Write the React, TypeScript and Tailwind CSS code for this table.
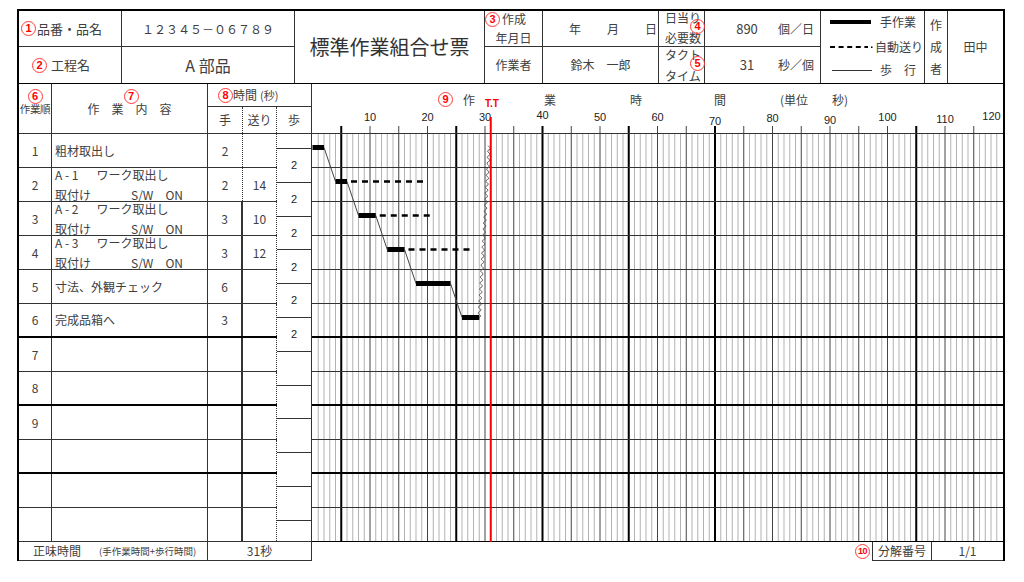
import React from "react";

const Num = ({ n, className = "" }: { n: string; className?: string }) => (
  <span
    className={`inline-flex w-[15px] h-[15px] shrink-0 items-center justify-center rounded-full border border-[#ff3b3b] text-[#ff0000] font-bold leading-none font-['Liberation_Sans',sans-serif] ${
      n.length > 1 ? "text-[9px] tracking-[-0.5px]" : "text-[11px]"
    } ${className}`}
  >
    {n}
  </span>
);

type Row = {
  n?: string;
  text?: string;
  code?: string;
  hand?: string;
  auto?: string;
};

const rows: Row[] = [
  { n: "1", text: "粗材取出し", hand: "2" },
  { n: "2", code: "A - 1", hand: "2", auto: "14" },
  { n: "3", code: "A - 2", hand: "3", auto: "10" },
  { n: "4", code: "A - 3", hand: "3", auto: "12" },
  { n: "5", text: "寸法、外観チェック", hand: "6" },
  { n: "6", text: "完成品箱へ", hand: "3" },
  { n: "7" },
  { n: "8" },
  { n: "9" },
  {},
  {},
  {},
];

// chart scale: 5.75px per second
const X = (t: number) => 0.5 + 5.75 * t;
const yc = (i: number) => 39.5 + 34 * i;

const bars = [
  [0, 2],
  [4, 6],
  [8, 11],
  [13, 16],
  [18, 24],
  [26, 29],
];
const autos: (number[] | null)[] = [null, [6, 20], [11, 21], [16, 28], null, null];
const thickT = [5, 25, 40, 55, 70, 105];
const labelY: Record<number, number> = {
  10: 117, 20: 117, 30: 117, 40: 115, 50: 117, 60: 117,
  70: 121, 80: 118, 90: 120, 100: 117, 110: 119, 120: 116,
};

function wave(x0: number, y0: number, x1: number, y1: number) {
  const dx = x1 - x0;
  const dy = y1 - y0;
  const L = Math.hypot(dx, dy);
  const nx = -dy / L;
  const ny = dx / L;
  const pts: string[] = [];
  for (let s = 0; s <= L; s += 1) {
    const off = 1.3 * Math.sin((2 * Math.PI * s) / 6);
    pts.push(`${(x0 + (dx * s) / L + nx * off).toFixed(2)},${(y0 + (dy * s) / L + ny * off).toFixed(2)}`);
  }
  return pts.join(" ");
}

const Chart = () => {
  const verticals = [];
  for (let t = 1; t < 120; t++) {
    if (thickT.includes(t)) {
      verticals.push(<rect key={t} x={X(t) - 1} y={18} width={2} height={416} fill="#000" />);
    } else if (t % 5 === 0) {
      verticals.push(<line key={t} x1={X(t)} x2={X(t)} y1={18} y2={433} stroke="#444" strokeWidth={1} />);
    } else {
      verticals.push(<line key={t} x1={X(t)} x2={X(t)} y1={25} y2={433} stroke="#b3b3b3" strokeWidth={1} />);
    }
  }
  const horizontals = [];
  for (let k = 0; k <= 12; k++) {
    const thick = k === 6 || k === 8 || k === 10;
    horizontals.push(
      <rect
        key={k}
        x={0}
        y={thick ? 24 + 34 * k : 25 + 34 * k}
        width={691}
        height={thick ? 2 : 1}
        fill={k === 12 || thick ? "#000" : "#333"}
      />
    );
  }
  return (
    <svg width={691} height={434} viewBox="0 0 691 434" className="block">
      {verticals}
      {horizontals}
      {Object.entries(labelY).map(([t, y]) => {
        const tt = Number(t);
        return (
          <text
            key={t}
            x={tt === 120 ? X(120) - 11 : X(tt)}
            y={y - 108 + 4}
            textAnchor="middle"
            fontSize={11}
            fill="#222"
            fontFamily="'Liberation Sans', sans-serif"
          >
            {t}
          </text>
        );
      })}
      {/* walking lines between steps */}
      {bars.slice(0, 5).map((b, i) => (
        <line
          key={`w${i}`}
          x1={X(b[1])}
          y1={yc(i)}
          x2={X(bars[i + 1][0])}
          y2={yc(i + 1)}
          stroke="#444"
          strokeWidth={1}
        />
      ))}
      <polyline
        points={wave(X(29), yc(5), X(31) - 1.5, yc(0) - 2)}
        fill="none"
        stroke="#555"
        strokeWidth={1}
      />
      {autos.map((a, i) =>
        a ? (
          <line
            key={`a${i}`}
            x1={X(a[0]) + 4}
            x2={X(a[1])}
            y1={yc(i)}
            y2={yc(i)}
            stroke="#000"
            strokeWidth={2.5}
            strokeDasharray="6 5"
          />
        ) : null
      )}
      {bars.map((b, i) => (
        <rect key={`b${i}`} x={X(b[0])} y={yc(i) - 2.5} width={X(b[1]) - X(b[0])} height={5} fill="#000" />
      ))}
      <rect x={X(31) - 1} y={9} width={2} height={425} fill="#ff0000" />
    </svg>
  );
};

export default function App() {
  return (
    <div className="w-[1024px] h-[582px] bg-white overflow-hidden pl-[17px] pt-[9px] text-[#404040] font-['Noto_Sans_CJK_JP',sans-serif]">
      {/* ========== HEADER ========== */}
      <div className="w-[988px] grid grid-cols-[103px_173px_190px_58px_116px_46px_116px_104px_23px_57px] grid-rows-[36px_36px] border-t-2 border-l-2 border-b border-black">
        <div className="border-r border-b border-[#333] flex items-center pl-[2px] text-[13px]">
          <Num n="1" />
          <span className="ml-[1px]">品番・品名</span>
        </div>
        <div className="border-r border-b border-[#333] flex items-center justify-center text-[12px]">
          １２３４５－０６７８９
        </div>
        <div className="row-span-2 border-r border-[#333] flex items-center justify-center text-[20px] text-[#333]">
          標準作業組合せ票
        </div>
        <div className="border-r border-b border-[#333] flex flex-col text-[12px]">
          <div className="h-[16px] flex items-center">
            <Num n="3" />
            <span className="ml-[2px] leading-[16px]">作成</span>
          </div>
          <div className="mt-[3px] leading-[16px] text-center">年月日</div>
        </div>
        <div className="border-r border-b border-[#333] flex items-center pl-[26px] gap-[26px] text-[12px]">
          <span>年</span>
          <span>月</span>
          <span>日</span>
        </div>
        <div className="relative border-r border-b border-[#333] pl-[6px] text-[12px] whitespace-nowrap">
          <div className="leading-[14px]">日当り</div>
          <div className="leading-[14px] mt-[6px]">必要数</div>
          <Num n="4" className="absolute left-[31px] top-[8px]" />
        </div>
        <div className="border-r border-b border-[#333] flex items-center pr-[6px]">
          <span className="ml-[17px] w-[50px] text-center text-[13px]">890</span>
          <span className="ml-auto text-[12px]">個／日</span>
        </div>
        <div className="row-span-2 border-r border-[#333] flex flex-col pt-[3px] pl-[9px] text-[12px]">
          <div className="h-[16px] flex items-center">
            <span className="w-[41px] h-[4px] bg-black" />
            <span className="ml-[9px]">手作業</span>
          </div>
          <div className="h-[16px] mt-[9px] flex items-center">
            <svg width={44} height={4} className="block">
              <line x1={0} x2={38} y1={2} y2={2} stroke="#000" strokeWidth={2} strokeDasharray="5 3.6" />
              <rect x={41} y={1.5} width={1.5} height={1.5} fill="#000" />
            </svg>
            <span className="ml-[1px]">自動送り</span>
          </div>
          <div className="h-[16px] mt-[7px] flex items-center">
            <span className="ml-[2px] w-[40px] h-[1px] bg-[#333]" />
            <span className="ml-[8px]">歩　行</span>
          </div>
        </div>
        <div className="row-span-2 border-r border-[#333] flex flex-col items-center justify-center text-[12px] leading-[22px]">
          <span>作</span>
          <span>成</span>
          <span>者</span>
        </div>
        <div className="row-span-2 border-r-2 border-black flex items-center justify-center text-[12px]">
          田中
        </div>

        {/* row 2 */}
        <div className="border-r border-[#333] flex items-center pl-[13px] text-[13px]">
          <Num n="2" />
          <span className="ml-[4px]">工程名</span>
        </div>
        <div className="border-r border-[#333] flex items-center justify-center text-[16px]">
          A 部品
        </div>
        <div className="border-r border-[#333] flex items-center justify-center text-[12px]">
          作業者
        </div>
        <div className="border-r border-[#333] flex items-center justify-center text-[12px]">
          鈴木　一郎
        </div>
        <div className="relative border-r border-[#333] pl-[6px] text-[12px] whitespace-nowrap">
          <div className="leading-[14px] mt-[1px]">タクト</div>
          <div className="leading-[14px] mt-[7px]">タイム</div>
          <Num n="5" className="absolute left-[31px] top-[9px]" />
        </div>
        <div className="border-r border-[#333] flex items-center pr-[6px]">
          <span className="ml-[17px] w-[50px] text-center text-[13px]">31</span>
          <span className="ml-auto text-[12px]">秒／個</span>
        </div>
      </div>

      {/* ========== BODY ========== */}
      <div className="w-[988px] flex">
        {/* left table */}
        <div className="w-[295px] flex flex-col border-l-2 border-black">
          <div className="h-[50px] flex border-b border-[#333]">
            <div className="w-[33px] border-r border-[#333] flex flex-col items-center pt-[5px]">
              <Num n="6" />
              <span className="text-[10.5px] leading-[12px] -mt-[1px] tracking-[-0.3px] whitespace-nowrap">作業順</span>
            </div>
            <div className="w-[156px] border-r border-[#333] flex flex-col items-center pt-[5px]">
              <Num n="7" className="ml-[3px]" />
              <span className="text-[12px] leading-[14px] -mt-[2px]">作　業　内　容</span>
            </div>
            <div className="w-[104px] border-r border-[#333] flex flex-col">
              <div className="h-[23px] border-b border-[#333] flex items-center pl-[10px]">
                <Num n="8" />
                <span className="text-[12px] leading-none">時間</span>
                <span className="text-[11px] leading-none ml-[3px]">(秒)</span>
              </div>
              <div className="flex-1 flex text-[12px]">
                <div className="w-[35px] border-r border-dotted border-[#333] flex items-center justify-center">手</div>
                <div className="w-[34px] border-r border-dotted border-[#333] flex items-center justify-center">送り</div>
                <div className="flex-1 flex items-center justify-center">歩</div>
              </div>
            </div>
          </div>

          <div className="h-[407px] flex">
            <div className="w-[258px] flex flex-col">
              {rows.map((r, i) => {
                const thick = i === 5 || i === 7 || i === 9;
                const last = i === rows.length - 1;
                return (
                  <div
                    key={i}
                    className={`flex text-[12px] ${last ? "h-[33px]" : "h-[34px]"} ${
                      last ? "" : thick ? "border-b-2 border-black" : "border-b border-[#333]"
                    }`}
                  >
                    <div className="w-[33px] border-r border-[#333] flex items-center justify-center">{r.n}</div>
                    <div className="w-[156px] border-r border-[#333] pl-[3px] whitespace-nowrap">
                      {r.code ? (
                        <div className="flex flex-col">
                          <div className="leading-[14px]">
                            <span>{r.code}</span>
                            <span className="ml-[18px]">ワーク取出し</span>
                          </div>
                          <div className="leading-[14px] mt-[6px]">
                            <span>取付け</span>
                            <span className="ml-[40px]">S/W</span>
                            <span className="ml-[12px]">ON</span>
                          </div>
                        </div>
                      ) : (
                        <div className="h-full flex items-center">{r.text}</div>
                      )}
                    </div>
                    <div
                      className={`w-[35px] flex items-center justify-center ${
                        i < 2 ? "border-r border-dotted border-[#333]" : "border-r-2 border-[#333]"
                      }`}
                    >
                      {r.hand}
                    </div>
                    <div className="w-[34px] border-r border-dotted border-[#333] flex items-center justify-center">
                      {r.auto}
                    </div>
                  </div>
                );
              })}
            </div>
            <div className="w-[35px] flex flex-col border-r border-[#333]">
              <div className="h-[15px] border-b border-[#333]" />
              {Array.from({ length: 11 }).map((_, k) => (
                <div
                  key={k}
                  className="h-[33.8px] border-b border-[#333] flex items-center justify-center text-[11px] text-[#222] font-['Liberation_Sans',sans-serif]"
                >
                  {k < 6 ? "2" : ""}
                </div>
              ))}
              <div className="flex-1" />
            </div>
          </div>

          <div className="h-[20px] flex border-t border-b border-[#333]">
            <div className="w-[189px] border-r border-[#333] flex items-center pl-[14px] whitespace-nowrap">
              <span className="text-[12px]">正味時間</span>
              <span className="ml-[18px] text-[9.5px]">(手作業時間+歩行時間)</span>
            </div>
            <div className="w-[104px] border-r border-[#333] flex items-center justify-center text-[12px]">31秒</div>
          </div>
        </div>

        {/* chart */}
        <div className="w-[693px] flex flex-col border-r-2 border-black">
          <div className="h-[24px] flex items-start pt-[9px] text-[12px] whitespace-nowrap">
            <Num n="9" className="ml-[126px] -mt-[1px]" />
            <span className="ml-[10px] leading-[14px]">作</span>
            <span className="ml-[10px] mt-[5px] leading-[12px] text-[10px] font-bold text-[#ff0000] font-['Liberation_Sans',sans-serif]">
              T.T
            </span>
            <span className="ml-[45px] leading-[14px]">業</span>
            <span className="ml-[74px] leading-[14px]">時</span>
            <span className="ml-[72px] leading-[14px]">間</span>
            <span className="ml-[54px] leading-[14px]">(単位</span>
            <span className="ml-[24px] leading-[14px]">秒)</span>
          </div>
          <Chart />
          <div className="h-[19px] flex justify-end">
            <Num n="10" className="self-center mr-[2px]" />
            <div className="w-[59px] border-l border-b border-[#333] flex items-center justify-center text-[12px]">
              分解番号
            </div>
            <div className="w-[72px] border-l border-b border-[#333] flex items-center justify-center text-[12px]">
              1/1
            </div>
          </div>
        </div>
      </div>
    </div>
  );
}
